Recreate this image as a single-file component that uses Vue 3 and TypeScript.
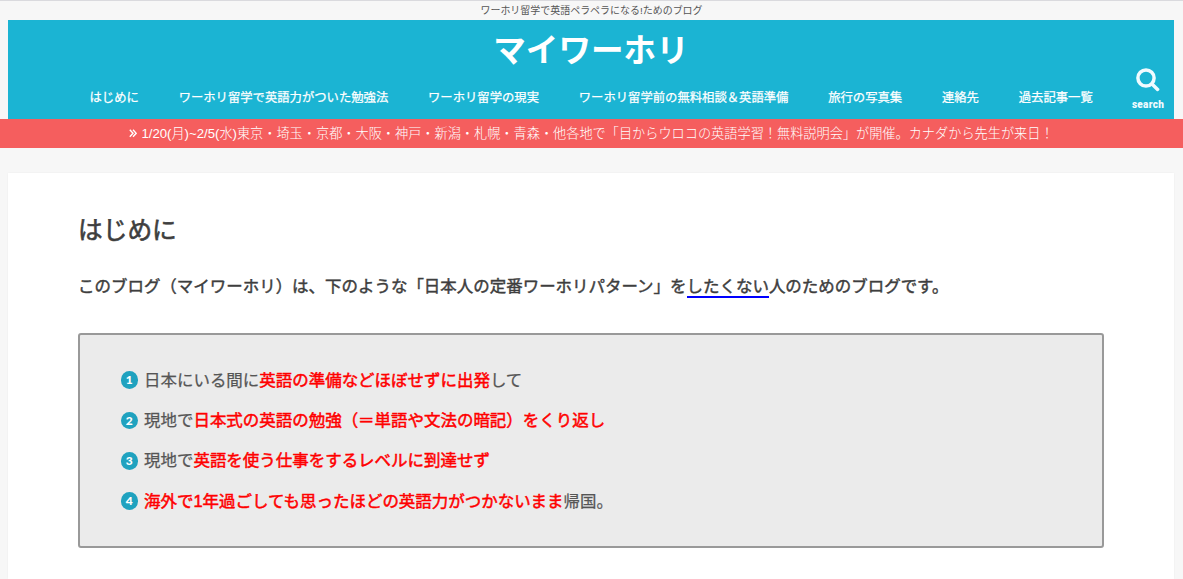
<script setup lang="ts">
interface Segment {
  text: string
  strong?: boolean
}

const navItems: string[] = [
  'はじめに',
  'ワーホリ留学で英語力がついた勉強法',
  'ワーホリ留学の現実',
  'ワーホリ留学前の無料相談＆英語準備',
  '旅行の写真集',
  '連絡先',
  '過去記事一覧',
]

const steps: Segment[][] = [
  [
    { text: '日本にいる間に' },
    { text: '英語の準備などほぼせずに出発', strong: true },
    { text: 'して' },
  ],
  [
    { text: '現地で' },
    { text: '日本式の英語の勉強（＝単語や文法の暗記）をくり返し', strong: true },
  ],
  [
    { text: '現地で' },
    { text: '英語を使う仕事をするレベルに到達せず', strong: true },
  ],
  [
    { text: '海外で1年過ごしても思ったほどの英語力がつかないまま', strong: true },
    { text: '帰国。' },
  ],
]
</script>

<template>
  <div class="page">
    <p class="tagline">ワーホリ留学で英語ペラペラになる!ためのブログ</p>

    <header class="header">
      <h1 class="site-title">マイワーホリ</h1>
      <div class="header-row">
        <nav class="nav">
          <a v-for="item in navItems" :key="item" class="nav-link">{{ item }}</a>
        </nav>
        <button class="search" type="button" aria-label="search">
          <svg class="search-icon" viewBox="0 0 24 24" width="24" height="24">
            <circle cx="10" cy="10" r="8.1" />
            <path d="M16 16 L21.6 21.4" />
          </svg>
          <span class="search-label">search</span>
        </button>
      </div>
    </header>

    <a class="notice">
      <svg class="notice-icon" viewBox="0 0 8 9" width="8" height="9">
        <path d="M0.8 0.8 L4 4.3 L0.8 7.8 M4 0.8 L7.2 4.3 L4 7.8" />
      </svg>
      <span>1/20(月)~2/5(水)東京・埼玉・京都・大阪・神戸・新潟・札幌・青森・他各地で「目からウロコの英語学習！無料説明会」が開催。カナダから先生が来日！</span>
    </a>

    <main class="card">
      <h2 class="heading">はじめに</h2>
      <p class="lead">このブログ（マイワーホリ）は、下のような「日本人の定番ワーホリパターン」を<span class="underlined">したくない</span>人のためのブログです。</p>
      <ol class="steps">
        <li v-for="(step, i) in steps" :key="i" class="step">
          <span class="step-number">{{ i + 1 }}</span>
          <span class="step-text"><span v-for="(part, j) in step" :key="j" :class="{ strong: part.strong }">{{ part.text }}</span></span>
        </li>
      </ol>
    </main>
  </div>
</template>

<style>
body {
  background: #f7f7f7;
  overflow: hidden;
}
</style>

<style scoped>
.page {
  box-sizing: border-box;
  height: 579px;
  overflow: hidden;
  display: flex;
  flex-direction: column;
  border-top: 1px solid #dadade;
  background: #f7f7f7;
  color: #3e3e3e;
  font-family: 'Liberation Sans', 'Noto Sans CJK JP', sans-serif;
  font-size: 16.48px;
}

.tagline {
  margin: 0;
  height: 19px;
  line-height: 19px;
  font-size: 9.98px;
  text-align: center;
  color: #555;
}

.header {
  flex: none;
  height: 99px;
  margin: 0 9px 0 8px;
  background: #1bb4d3;
  color: #fff;
}

.site-title {
  margin: 0;
  height: 48px;
  padding-top: 7px;
  box-sizing: border-box;
  line-height: 48px;
  font-size: 32.6px;
  font-weight: 700;
  text-align: center;
}

.header-row {
  display: flex;
  align-items: flex-start;
  justify-content: space-between;
  padding: 0 8px 0 81.5px;
}

.nav {
  display: flex;
  gap: 39.8px;
  padding-top: 20px;
}

.nav-link {
  font-size: 12.34px;
  line-height: 20px;
  white-space: nowrap;
  -webkit-text-stroke: 0.25px currentColor;
}

.search {
  display: flex;
  flex-direction: column;
  align-items: center;
  width: 36px;
  padding: 0;
  border: none;
  background: none;
  color: #f0fbff;
  cursor: pointer;
}

.search-icon {
  fill: none;
  stroke: currentColor;
  stroke-width: 3.5;
  stroke-linecap: round;
}

.search-label {
  margin-top: 7px;
  font-family: Roboto, sans-serif;
  font-size: 10px;
  font-weight: 900;
  line-height: 12px;
  letter-spacing: 0.3px;
}

.notice {
  flex: none;
  height: 29px;
  display: flex;
  align-items: center;
  justify-content: center;
  gap: 4px;
  background: #f55e5e;
  color: #fff;
  font-size: 13.18px;
  font-weight: 300;
  line-height: 29px;
  white-space: nowrap;
}

.notice-icon {
  fill: none;
  stroke: currentColor;
  stroke-width: 1.4;
}

.card {
  flex: 1;
  margin: 25px 9px 0 8px;
  padding: 41px 70px 0;
  background: #fff;
  box-shadow: 0 0 2px rgba(0, 0, 0, 0.05);
}

.heading {
  margin: 0;
  font-size: 24.7px;
  font-weight: 400;
  line-height: 34px;
  -webkit-text-stroke: 0.6px currentColor;
}

.lead {
  margin: 24px 0 32px;
  font-weight: 400;
  line-height: 29px;
  white-space: nowrap;
  -webkit-text-stroke: 0.45px currentColor;
}

.underlined {
  padding-bottom: 1px;
  border-bottom: 2px solid #00f;
}

.steps {
  box-sizing: border-box;
  height: 215px;
  margin: 0;
  padding: 30.5px 40px 0 40.5px;
  list-style: none;
  border: 2px solid #999;
  border-radius: 3px;
  background: #ebebeb;
}

.step {
  display: flex;
  align-items: center;
  gap: 6px;
  height: 29px;
  margin-bottom: 11.4px;
  color: #555;
  white-space: nowrap;
}

.step-number {
  width: 17.5px;
  height: 17.5px;
  border-radius: 50%;
  background: #1fa2bf;
  color: #fff;
  font-family: Lato, sans-serif;
  font-size: 12px;
  font-weight: 900;
  line-height: 17.5px;
  text-align: center;
}

.step-text {
  line-height: 29px;
  -webkit-text-stroke: 0.25px currentColor;
}

.strong {
  color: #f00;
  -webkit-text-stroke: 0.5px currentColor;
}
</style>
